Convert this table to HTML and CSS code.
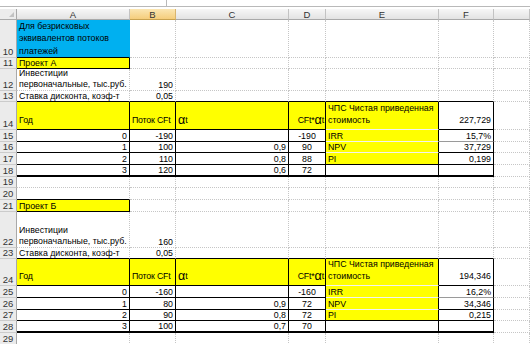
FILE: index.html
```html
<!DOCTYPE html>
<html lang="ru">
<head>
<meta charset="utf-8">
<title>Лист</title>
<link rel="stylesheet" href="styles.css">
</head>
<body>
<div class="top"><div class="topbar"><div class="namebox"></div></div></div>
<div class="sheet">
  <!-- header -->
  <div class="corner"><span class="tri"></span></div>
  <div class="ch">A</div><div class="ch sel">B</div><div class="ch">C</div><div class="ch">D</div><div class="ch">E</div><div class="ch">F</div><div class="ch"></div>

  <!-- 10 -->
  <div class="rh">10</div>
  <div class="c bl bb l3">Для безрисковых<br>эквивалентов потоков<br>платежей</div>
  <div class="c"></div><div class="c"></div><div class="c"></div><div class="c"></div><div class="c"></div><div class="c"></div>

  <!-- 11 -->
  <div class="rh">11</div>
  <div class="c y br bb">Проект А</div>
  <div class="c"></div><div class="c"></div><div class="c"></div><div class="c"></div><div class="c"></div><div class="c"></div>

  <!-- 12 -->
  <div class="rh">12</div>
  <div class="c l2">Инвестиции<br>первоначальные, тыс.руб.</div>
  <div class="c r">190</div>
  <div class="c"></div><div class="c"></div><div class="c"></div><div class="c"></div><div class="c"></div>

  <!-- 13 -->
  <div class="rh">13</div>
  <div class="c bb">Ставка дисконта, коэф-т</div>
  <div class="c r bb">0,05</div>
  <div class="c bb"></div><div class="c bb"></div><div class="c bb"></div><div class="c bb"></div><div class="c"></div>

  <!-- 14 -->
  <div class="rh">14</div>
  <div class="c y br bb hd">Год</div>
  <div class="c y br bb hd tight">Поток CFt</div>
  <div class="c y br bb hd"><span class="al">α</span>t</div>
  <div class="c y br bb hd r tight">CFt*<span class="al">α</span>t</div>
  <div class="c y br wl npv">ЧПС Чистая приведенная<br>стоимость</div>
  <div class="c br bb hd r">227,729</div>
  <div class="c"></div>

  <!-- 15 -->
  <div class="rh">15</div>
  <div class="c r br bb">0</div>
  <div class="c r br bb">-190</div>
  <div class="c r br bb"></div>
  <div class="c m br bb">-190</div>
  <div class="c y br wl">IRR</div>
  <div class="c r br gb">15,7%</div>
  <div class="c"></div>

  <!-- 16 -->
  <div class="rh">16</div>
  <div class="c r br bb">1</div>
  <div class="c r br bb">100</div>
  <div class="c r br bb">0,9</div>
  <div class="c m br bb">90</div>
  <div class="c y br wl">NPV</div>
  <div class="c r br bb">37,729</div>
  <div class="c"></div>

  <!-- 17 -->
  <div class="rh">17</div>
  <div class="c r br bb">2</div>
  <div class="c r br bb">110</div>
  <div class="c r br bb">0,8</div>
  <div class="c m br bb">88</div>
  <div class="c y br bb">PI</div>
  <div class="c r br bb">0,199</div>
  <div class="c"></div>

  <!-- 18 -->
  <div class="rh">18</div>
  <div class="c r br b2">3</div>
  <div class="c r br b2">120</div>
  <div class="c r br b2">0,6</div>
  <div class="c m br b2">72</div>
  <div class="c br b2"></div>
  <div class="c r br b2"></div>
  <div class="c"></div>

  <!-- 19 -->
  <div class="rh">19</div>
  <div class="c"></div><div class="c"></div><div class="c"></div><div class="c"></div><div class="c"></div><div class="c"></div><div class="c"></div>

  <!-- 20 -->
  <div class="rh">20</div>
  <div class="c bb"></div><div class="c"></div><div class="c"></div><div class="c"></div><div class="c"></div><div class="c"></div><div class="c"></div>

  <!-- 21 -->
  <div class="rh">21</div>
  <div class="c y br bb">Проект Б</div>
  <div class="c"></div><div class="c"></div><div class="c"></div><div class="c"></div><div class="c"></div><div class="c"></div>

  <!-- 22 -->
  <div class="rh">22</div>
  <div class="c l2">Инвестиции<br>первоначальные, тыс.руб.</div>
  <div class="c r">160</div>
  <div class="c"></div><div class="c"></div><div class="c"></div><div class="c"></div><div class="c"></div>

  <!-- 23 -->
  <div class="rh">23</div>
  <div class="c bb">Ставка дисконта, коэф-т</div>
  <div class="c r bb">0,05</div>
  <div class="c bb"></div><div class="c bb"></div><div class="c bb"></div><div class="c bb"></div><div class="c"></div>

  <!-- 24 -->
  <div class="rh">24</div>
  <div class="c y br bb hd">Год</div>
  <div class="c y br bb hd tight">Поток CFt</div>
  <div class="c y br bb hd"><span class="al">α</span>t</div>
  <div class="c y br bb hd r tight">CFt*<span class="al">α</span>t</div>
  <div class="c y br wl npv">ЧПС Чистая приведенная<br>стоимость</div>
  <div class="c br bb hd r">194,346</div>
  <div class="c"></div>

  <!-- 25 -->
  <div class="rh">25</div>
  <div class="c r br bb">0</div>
  <div class="c r br bb">-160</div>
  <div class="c r br bb"></div>
  <div class="c m br bb">-160</div>
  <div class="c y br wl">IRR</div>
  <div class="c r br gb">16,2%</div>
  <div class="c"></div>

  <!-- 26 -->
  <div class="rh">26</div>
  <div class="c r br bb">1</div>
  <div class="c r br bb">80</div>
  <div class="c r br bb">0,9</div>
  <div class="c m br bb">72</div>
  <div class="c y br wl">NPV</div>
  <div class="c r br bb">34,346</div>
  <div class="c"></div>

  <!-- 27 -->
  <div class="rh">27</div>
  <div class="c r br bb">2</div>
  <div class="c r br bb">90</div>
  <div class="c r br bb">0,8</div>
  <div class="c m br bb">72</div>
  <div class="c y br bb">PI</div>
  <div class="c r br bb">0,215</div>
  <div class="c"></div>

  <!-- 28 -->
  <div class="rh">28</div>
  <div class="c r br b2">3</div>
  <div class="c r br b2">100</div>
  <div class="c r br b2">0,7</div>
  <div class="c m br b2">70</div>
  <div class="c br b2"></div>
  <div class="c r br b2"></div>
  <div class="c"></div>

  <!-- 29 -->
  <div class="rh">29</div>
  <div class="c"></div><div class="c"></div><div class="c"></div><div class="c"></div><div class="c"></div><div class="c"></div><div class="c"></div>
</div>
</body>
</html>
```

FILE: styles.css
```css
* { box-sizing: border-box; margin: 0; padding: 0; }
html, body { width: 530px; height: 344px; overflow: hidden; background: #fff; }
body {
  font-family: "Liberation Sans", Arial, sans-serif;
  font-size: 8.8px;
  color: #000;
}

.top { height: 9px; background: #fff; }
.topbar { height: 7px; display: flex; border-bottom: 1px solid #b9b9b9; }
.namebox { width: 167px; border-right: 1px solid #b9b9b9; }

.sheet {
  display: grid;
  grid-template-columns: 17px 113px 46px 113px 37px 113px 55px 36px;
  grid-template-rows: 11px 38px 11px 22px 11px 28px 12px 11px 12px 12px 11px 12px 12px 36px 11px 27px 12px 12px 11px 12px 12px;
}

.corner {
  display: flex;
  justify-content: flex-end;
  align-items: flex-end;
  padding: 0 2px 2px 0;
  background: #ececec;
  border-right: 1px solid #a9a9a9;
  border-bottom: 1px solid #a9a9a9;
}
.tri {
  width: 0; height: 0;
  border-left: 5px solid transparent;
  border-bottom: 5px solid #c2c2c2;
}

.ch {
  display: flex;
  justify-content: center;
  align-items: center;
  font-size: 9.5px;
  color: #333;
  background: linear-gradient(#f7f7f7, #e3e3e3);
  border-right: 1px solid #c3c3c3;
  border-bottom: 1px solid #a9a9a9;
}
.ch.sel {
  background: linear-gradient(#fbe6b3, #f5cd7c);
  border-right-color: #d9b56e;
  border-bottom-color: #c9a24f;
}

.rh {
  display: flex;
  justify-content: center;
  align-items: flex-end;
  font-size: 9.5px;
  line-height: 11px;
  color: #333;
  background: #ebebeb;
  border-right: 1px solid #a9a9a9;
  border-bottom: 1px solid #cbcbcb;
}

.c {
  display: flex;
  align-items: flex-end;
  padding: 0 2px;
  line-height: 10px;
  white-space: nowrap;
  overflow: hidden;
  border-right: 1px dotted #c6c6c6;
  border-bottom: 1px dotted #c6c6c6;
}
.c.r { justify-content: flex-end; }
.c.m { justify-content: center; }
.c.l2 { line-height: 11px; }
.c.l3 { line-height: 12.5px; }
.c.hd { padding-bottom: 4px; }
.c.npv { line-height: 12px; padding-bottom: 3px; }
.c.tight { padding: 0 1px 4px 2px; letter-spacing: -0.2px; }

.y { background: #ffff00; border-right-color: transparent; border-bottom-color: transparent; }
.bl { background: #00b0f0; border-right-color: transparent; border-bottom-color: transparent; }

.br { border-right: 1px solid #000; }
.bb { border-bottom: 1px solid #000; }
.b2 { border-bottom: 2px solid #000; }
.wl { border-bottom: 1px solid #f2f2f2; }
.gb { border-bottom: 1px solid #9a9a9a; }

.al { font-size: 12.5px; line-height: 10px; letter-spacing: 0; }
```
